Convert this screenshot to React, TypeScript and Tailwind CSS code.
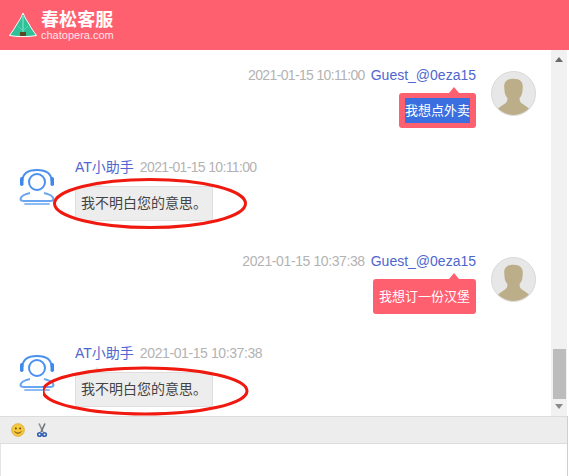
import React from 'react';

const CJK = "font-['Liberation_Sans','Noto_Sans_CJK_SC',sans-serif]";

function Logo() {
  return (
    <svg width="28" height="26" viewBox="0 0 28 26">
      <path d="M14 1 C16 6 18 9 20 12 C22 16 25 20 27.5 23.5 C20 25 8 25 0.5 23.5 C3 20 6 16 8 12 C10 9 12 6 14 1 Z" fill="#2fc09a" stroke="#fff" strokeWidth="1" strokeLinejoin="round" />
      <path d="M14 3 L14 21" stroke="#5ad6b2" strokeWidth="2" />
      <path d="M9 14 L14 19 L19 14" stroke="#5ad6b2" strokeWidth="1" fill="none" />
      <rect x="11" y="20" width="6" height="4" fill="#5a4a24" />
    </svg>
  );
}

function GuestAvatar() {
  return (
    <div className="w-[45px] h-[45px] rounded-full bg-[#e7e7e7] overflow-hidden shrink-0 border border-[#d9d9d9]">
      <svg width="43" height="43" viewBox="0 0 45 45">
        <path d="M22.500 7 C14 7 12 12 13 18 C13 22 14 25 16 27 C16.500 31 15 32 12 34 C9 36 6 38 4 42 L4 45 L41 45 L41 42 C39 38 36 36 33 34 C30 32 28.500 31 29 27 C31 25 32 22 32 18 C33 12 31 7 22.500 7 Z" fill="#bdae8a" />
      </svg>
    </div>
  );
}

function BotAvatar() {
  return (
    <svg width="36" height="36" viewBox="0 0 36 36" fill="none" className="shrink-0">
      <circle cx="18" cy="13" r="8" stroke="#4a90ee" strokeWidth="2" />
      <path d="M3.5 12 C3.5 4 10 1 18 1 C26 1 32.500 4 32.500 12" stroke="#4a90ee" strokeWidth="1.8" />
      <rect x="1" y="8" width="3.5" height="9" rx="1.7" fill="#3f88ec" />
      <rect x="31.500" y="8" width="3.500" height="9" rx="1.7" fill="#3f88ec" />
      <path d="M11 24 C6 25 2 27 1.500 30 C1.500 31.500 3 32 5 32 L31 32 C33 32 34.500 31.500 34.500 30 C34 27 30 25 25 24" stroke="#6aa5f1" strokeWidth="2" />
      <path d="M6 35 L30 35" stroke="#8fbbf5" strokeWidth="1.8" strokeLinecap="round" />
    </svg>
  );
}

function GuestMessage({ time, timeClass, text, selected }: { time: string; timeClass: string; text: string; selected?: boolean }) {
  return (
    <div className="flex justify-end pr-[15px]">
      <div className="flex flex-col items-end mr-[15px]">
        <div className="flex h-[20px] items-center text-[14px] leading-[20px]">
          <span className={`text-[#b3b3b3] mr-[6px] ${timeClass}`}>{time}</span>
          <span className="text-[#4f66cf]">Guest_@0eza15</span>
        </div>
        <div className="relative mt-[8px] rounded-[3px] bg-[#ff6070] px-[6px] py-[5px] text-[13px] leading-[25px] text-white">
          <div className="absolute -top-[6px] right-[17px] w-0 h-0 border-x-[5px] border-x-transparent border-b-[6px] border-b-[#ff6070]" />
          <span className={selected ? 'block bg-[#3b6fe0]' : 'block'}>{text}</span>
        </div>
      </div>
      <div className="mt-[6px]">
        <GuestAvatar />
      </div>
    </div>
  );
}

function BotMessage({ time, timeClass, cx, cy, rx, ry }: { time: string; timeClass: string; cx: number; cy: number; rx: number; ry: number }) {
  return (
    <div className="flex pl-[19px]">
      <div className="mt-[12px] w-[36px]">
        <BotAvatar />
      </div>
      <div className="ml-[20px] flex flex-col items-start">
        <div className="flex h-[20px] items-center text-[14px] leading-[20px]">
          <span className="text-[#4f66cf]">AT小助手</span>
          <span className={`text-[#b3b3b3] ml-[6px] ${timeClass}`}>{time}</span>
        </div>
        <div className="relative mt-[9px] rounded-[3px] border border-[#dfdfdf] bg-[#ededed] px-[5px] py-[4px] text-[14px] leading-[25px] text-[#444]">
          <div className="absolute -top-[6px] left-[16px] w-0 h-0 border-x-[5px] border-x-transparent border-b-[5px] border-b-[#e4e4e4]" />
          我不明白您的意思。
          <svg width="210" height="60" viewBox="0 0 210 60" fill="none" className="absolute -left-[33px] -top-[14px]">
            <ellipse cx={cx} cy={cy} rx={rx} ry={ry} stroke="#f0190f" strokeWidth="3" />
          </svg>
        </div>
      </div>
    </div>
  );
}

export default function App() {
  return (
    <div className={`h-[476px] w-[569px] flex flex-col overflow-hidden bg-white ${CJK}`}>
      <header className="h-[50px] shrink-0 bg-[#ff6070] flex items-center pl-[9px]">
        <Logo />
        <div className="ml-[4px] flex flex-col text-white">
          <span className="text-[18px] leading-[19px] font-bold tracking-[0.1px]">春松客服</span>
          <span className="text-[11px] leading-[10px] text-[#ffe3e6]">chatopera.com</span>
        </div>
      </header>

      <div className="flex-1 flex min-h-0 pr-[2px]">
        <main className="flex-1 pt-[15px] overflow-hidden">
          <GuestMessage time="2021-01-15 10:11:00" timeClass="tracking-[-0.65px]" text="我想点外卖" selected />
          <div className="mt-[29px]">
            <BotMessage time="2021-01-15 10:11:00" timeClass="tracking-[-0.65px]" cx={107} cy={30.5} rx={95.5} ry={24} />
          </div>
          <div className="mt-[30px]">
            <GuestMessage time="2021-01-15 10:37:38" timeClass="tracking-[-0.4px]" text="我想订一份汉堡" />
          </div>
          <div className="mt-[29px]">
            <BotMessage time="2021-01-15 10:37:38" timeClass="tracking-[-0.4px]" cx={102} cy={32} rx={102} ry={23} />
          </div>
        </main>
        <aside className="w-[16px] shrink-0 bg-[#f1f1f1] flex flex-col items-center py-[7px]">
          <div className="w-0 h-0 border-x-[4px] border-x-transparent border-b-[5px] border-b-[#6b6b6b]" />
          <div className="flex-1" />
          <div className="h-[50px] w-[13px] bg-[#bcbcbc] mb-[5px]" />
          <div className="w-0 h-0 border-x-[4px] border-x-transparent border-t-[5px] border-t-[#8a8a8a]" />
        </aside>
      </div>

      <div className="w-[568px] shrink-0 border-r border-[#cfcfcf]">
        <div className="h-[28px] bg-[#ededed] border-y border-[#dcdcdc] flex items-center pl-[11px] gap-[12px]">
          <svg width="14" height="14" viewBox="0 0 15 15">
            <circle cx="7.5" cy="7.5" r="6.8" fill="#f7c73e" stroke="#d9a526" strokeWidth="0.8" />
            <circle cx="5.2" cy="5.8" r="1" fill="#5b4308" />
            <circle cx="9.8" cy="5.8" r="1" fill="#5b4308" />
            <path d="M4 9 C5 11.5 10 11.5 11 9" stroke="#5b4308" strokeWidth="1" fill="none" />
          </svg>
          <svg width="10" height="15" viewBox="0 0 10 15" fill="none">
            <path d="M2 0.500 L6 9" stroke="#8a8f96" strokeWidth="1.6" />
            <path d="M8 0.500 L4 9" stroke="#6d7278" strokeWidth="1.6" />
            <circle cx="2.500" cy="11.500" r="1.800" stroke="#2f5fb0" strokeWidth="1.600" />
            <circle cx="7.500" cy="11.500" r="1.800" stroke="#2f5fb0" strokeWidth="1.600" />
          </svg>
        </div>
        <div className="h-[32px] bg-white border-l border-[#e4e4e4]" />
      </div>
    </div>
  );
}
